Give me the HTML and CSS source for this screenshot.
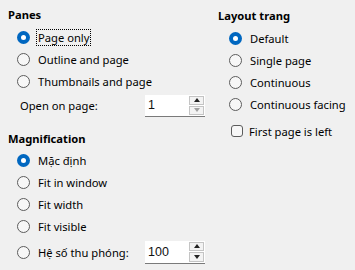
FILE: index.html
```html
<!DOCTYPE html>
<html>
<head>
<meta charset="utf-8">
<link rel="stylesheet" href="styles.css">
</head>
<body>
<div class="page">
  <div class="col left">
    <div class="heading h-panes">Panes</div>
    <div class="row radio-row"><span class="radio on"></span><span class="label focus">Page only</span></div>
    <div class="row radio-row"><span class="radio"></span><span class="label">Outline and page</span></div>
    <div class="row radio-row"><span class="radio"></span><span class="label">Thumbnails and page</span></div>
    <div class="row spin-row">
      <span class="label plain">Open on page:</span>
      <div class="spin">
        <div class="spin-field">1</div>
        <div class="spin-btns">
          <div class="spin-btn"><span class="arrow up"></span></div>
          <div class="spin-btn"><span class="arrow down disabled"></span></div>
        </div>
      </div>
    </div>
    <div class="heading h-mag">Magnification</div>
    <div class="row radio-row"><span class="radio on"></span><span class="label">Mặc định</span></div>
    <div class="row radio-row"><span class="radio"></span><span class="label">Fit in window</span></div>
    <div class="row radio-row"><span class="radio"></span><span class="label">Fit width</span></div>
    <div class="row radio-row"><span class="radio"></span><span class="label">Fit visible</span></div>
    <div class="row radio-row zoom-row">
      <span class="radio"></span><span class="label zoom-label">Hệ số thu phóng:</span>
      <div class="spin">
        <div class="spin-field">100</div>
        <div class="spin-btns">
          <div class="spin-btn"><span class="arrow up"></span></div>
          <div class="spin-btn"><span class="arrow down"></span></div>
        </div>
      </div>
    </div>
  </div>
  <div class="col right">
    <div class="heading h-layout">Layout trang</div>
    <div class="row radio-row"><span class="radio on"></span><span class="label">Default</span></div>
    <div class="row radio-row"><span class="radio"></span><span class="label">Single page</span></div>
    <div class="row radio-row"><span class="radio"></span><span class="label">Continuous</span></div>
    <div class="row radio-row"><span class="radio"></span><span class="label">Continuous facing</span></div>
    <div class="row check-row"><span class="check"></span><span class="label">First page is left</span></div>
  </div>
</div>
</body>
</html>
```

FILE: styles.css
```css
* { box-sizing: border-box; }
html, body {
  margin: 0;
  padding: 0;
  background: #f0f0f0;
}
body {
  font-family: "Noto Sans", "Open Sans", sans-serif;
  font-size: 11.2px;
  color: #000;
  width: 355px;
  height: 270px;
  overflow: hidden;
}
.page {
  display: flex;
}
.col {
  display: flex;
  flex-direction: column;
}
.left {
  width: 210px;
  padding-left: 8px;
  padding-top: 3px;
}
.right {
  padding-left: 8px;
  padding-top: 4px;
}
.heading {
  font-weight: bold;
  height: 23px;
  display: flex;
  align-items: center;
}
.h-layout { height: 23px; }
.h-mag { margin-top: 10px; height: 22px; }
.row {
  display: flex;
  align-items: center;
  height: 22px;
}
.radio-row { padding-left: 9px; }
.right .radio-row { padding-left: 11px; }
.radio {
  width: 13px;
  height: 13px;
  border-radius: 50%;
  border: 1px solid #5c5c5c;
  background: #f7f7f7;
  flex: none;
  position: relative;
}
.radio.on {
  border: none;
  background: #0067c0;
}
.radio.on::after {
  content: "";
  position: absolute;
  left: 4px;
  top: 4px;
  width: 5px;
  height: 5px;
  border-radius: 50%;
  background: #fff;
}
.label {
  margin-left: 6px;
  padding: 0 1px;
  line-height: 15px;
  border: 1px solid transparent;
  white-space: nowrap;
}
.label.focus {
  border: 1px dotted #000;
}
.label.plain {
  margin-left: 12px;
  width: 125px;
  padding: 0;
  border: none;
}
.spin-row {
  height: 23px;
  margin-top: 2px;
}
.zoom-row {
  height: 24px;
  margin-top: 3px;
}
.zoom-label {
  width: 109px;
}
.spin {
  display: flex;
  width: 60px;
  height: 22px;
  background: #fff;
  border-bottom: 1px solid #7a7a7a;
  padding: 1px 1px 1px 0;
}
.zoom-row .spin { height: 23px; }
.spin-field {
  flex: 1;
  display: flex;
  align-items: center;
  padding-left: 3px;
  font-family: "Liberation Sans", Arial, sans-serif;
  font-size: 12.5px;
  color: #111;
}
.spin-btns {
  width: 15px;
  display: flex;
  flex-direction: column;
  gap: 1px;
}
.spin-btn {
  flex: 1;
  border: 1px solid #c4c4c4;
  background: #f3f3f3;
  display: flex;
  align-items: center;
  justify-content: center;
}
.arrow {
  width: 0;
  height: 0;
  border-left: 3px solid transparent;
  border-right: 3px solid transparent;
}
.arrow.up { border-bottom: 4px solid #222; }
.arrow.down { border-top: 4px solid #222; }
.arrow.down.disabled { border-top-color: #a0a0a0; }
.check-row {
  padding-left: 13px;
  margin-top: 5px;
}
.check {
  width: 12px;
  height: 12px;
  border: 1px solid #5c5c5c;
  border-radius: 3px;
  background: #f7f7f7;
  flex: none;
}
.check-row .label { margin-left: 4px; }
```
